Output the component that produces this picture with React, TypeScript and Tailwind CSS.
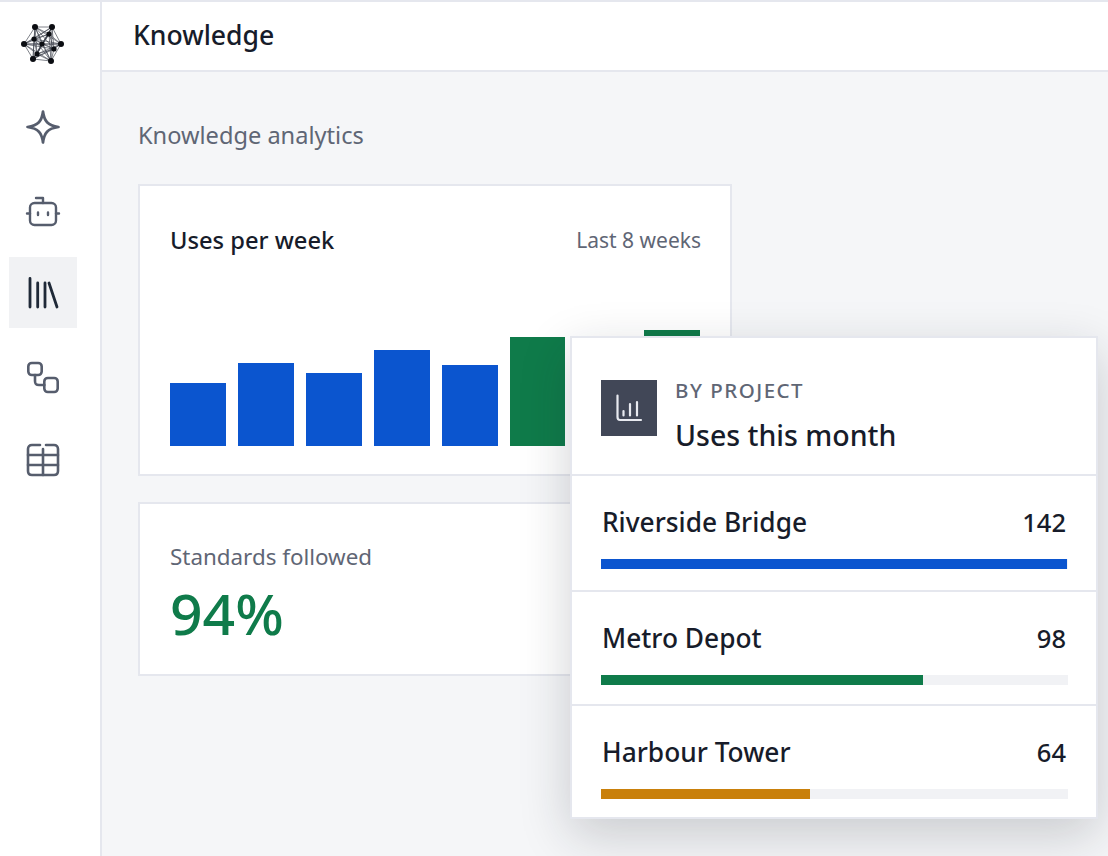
import React from "react";

const font = { fontFamily: '"Noto Sans", sans-serif' };
const bars = [
  { h: 63, w: "w-[56px]", c: "bg-[#0b55cf]" },
  { h: 83, w: "w-[56px]", c: "bg-[#0b55cf]" },
  { h: 73, w: "w-[56px]", c: "bg-[#0b55cf]" },
  { h: 96, w: "w-[56px]", c: "bg-[#0b55cf]" },
  { h: 81, w: "w-[56px]", c: "bg-[#0b55cf]" },
  { h: 109, w: "w-[55px]", c: "bg-[#0f7b4a]" },
  { h: 90, w: "w-[55px]", c: "bg-[#0b55cf]" },
  { h: 116, w: "w-[56px]", c: "bg-[#0f7b4a]" },
];
const rows = [
  { n: "Riverside Bridge", v: "142", w: 466, c: "bg-[#0b55cf]", h: "h-[116px]" },
  { n: "Metro Depot", v: "98", w: 322, c: "bg-[#0f7b4a]", h: "h-[114px]" },
  { n: "Harbour Tower", v: "64", w: 209, c: "bg-[#c9800b]", h: "h-[111px]" },
];

function Logo() {
  const pts: [number, number][] = [[35, 27], [52, 27], [61, 44], [51, 61], [33, 59], [24, 44], [34, 39], [49, 34], [42, 44], [54, 49], [37, 54]];
  return (
    <svg width="46" height="46" viewBox="20 21 46 46" className="block">
      {pts.map((a, i) =>
        pts.slice(i + 1).map((b, j) => (
          <line key={`${i}-${j}`} x1={a[0]} y1={a[1]} x2={b[0]} y2={b[1]} stroke="#3a3f4a" strokeWidth="0.65" />
        ))
      )}
      {pts.map((a, i) => (
        <circle key={i} cx={a[0]} cy={a[1]} r={i < 6 ? 3 : 2.6} fill="#0b0d12" />
      ))}
    </svg>
  );
}

const stroke = { fill: "none", stroke: "currentColor", strokeLinecap: "round" as const, strokeLinejoin: "round" as const };

function NavItem({ active, children }: { active?: boolean; children: React.ReactNode }) {
  return (
    <div className={`flex h-[71px] w-[68px] items-center justify-center ${active ? "bg-[#f1f2f4] text-[#1f2937]" : "text-[#565d6d]"}`}>
      {children}
    </div>
  );
}

export default function App() {
  return (
    <div className="flex h-[856px] w-[1108px] overflow-hidden border-t-2 border-[#e5e7ee] bg-[#f5f6f8] text-[#171c2a]" style={font}>
      <aside className="flex w-[102px] shrink-0 flex-col items-center border-r-2 border-[#e5e7ee] bg-white pr-[14px]">
        <div className="flex h-[89px] w-[68px] shrink-0 items-start justify-center pt-[19px]">
          <Logo />
        </div>
        <div className="flex w-[68px] flex-col gap-[12px]">
          <NavItem>
            <svg width="36" height="36" viewBox="0 0 36 36" {...stroke} strokeWidth="2.7">
              <path d="M18 2.5 C19.2 12 22.5 16.5 33.5 18 C22.5 19.5 19.2 24 18 33.5 C16.8 24 13.5 19.5 2.5 18 C13.5 16.5 16.8 12 18 2.5 Z" />
            </svg>
          </NavItem>
          <NavItem>
            <svg width="36" height="36" viewBox="0 0 36 36" {...stroke} strokeWidth="2.4" className="mt-[3px]">
              <rect x="5" y="10" width="26" height="22" rx="4.5" />
              <path d="M18 10 V5 H11" />
              <path d="M2 20.5 H5 M31 20.5 H34" />
              <path d="M13 19.5 V22 M23 19.5 V22" />
            </svg>
          </NavItem>
          <NavItem active>
            <svg width="34" height="34" viewBox="0 0 34 34" {...stroke} strokeWidth="2.8">
              <path d="M4 2.5 V31 M11.7 7 V31 M19 7 V31 M23 7 L31 31" />
            </svg>
          </NavItem>
          <NavItem>
            <svg width="36" height="36" viewBox="0 0 36 36" {...stroke} strokeWidth="2.6" className="mt-[3px]">
              <rect x="3.3" y="4" width="13.4" height="12" rx="3.5" />
              <rect x="19.3" y="19" width="13.4" height="14" rx="3.5" />
              <path d="M10 16 V22 C10 25 11 26 14 26 H19.3" />
            </svg>
          </NavItem>
          <NavItem>
            <svg width="36" height="36" viewBox="0 0 36 36" {...stroke} strokeWidth="2.6" className="mt-[3px]">
              <path d="M15 3 H7 C4.5 3 3 4.5 3 7 V29 C3 31.5 4.5 33 7 33 H29 C31.5 33 33 31.5 33 29 V7 C33 4.5 31.5 3 29 3 H21" />
              <path d="M3 13 H33 M3 23 H33 M18 7 V33" />
            </svg>
          </NavItem>
        </div>
      </aside>

      <main className="relative flex-1">
        <header className="flex h-[70px] items-center border-b-2 border-[#e5e7ee] bg-white pb-[2px] pl-[31px]">
          <h1 className="text-[26.6px] font-medium leading-none">Knowledge</h1>
        </header>
        <div className="pl-[36px] pt-[47px]">
          <p className="text-[23.6px] leading-[32px] text-[#5f6675]">Knowledge analytics</p>
          <section className="mt-[33px] h-[292px] w-[594px] border-2 border-[#e5e7ee] bg-white">
            <div className="flex items-center justify-between pl-[30px] pr-[29px] pt-[38px]">
              <h2 className="text-[23.7px] font-medium leading-[32px]">Uses per week</h2>
              <span className="text-[21px] leading-[32px] text-[#5f6675]">Last 8 weeks</span>
            </div>
            <div className="ml-[30px] mt-[44px] flex h-[146px] items-end gap-[12px]">
              {bars.map((b, i) => (
                <div key={i} className={`${b.w} ${b.c}`} style={{ height: b.h }} />
              ))}
            </div>
          </section>
          <section className="mt-[26px] h-[174px] w-[594px] border-2 border-[#e5e7ee] bg-white pl-[30px] pt-[37px]">
            <p className="text-[22.4px] leading-[32px] text-[#5f6675]">Standards followed</p>
            <p className="mt-[7px] text-[57px] font-medium leading-[66px] text-[#0f7b4a]">94%</p>
          </section>
        </div>

        <div className="absolute left-[468px] top-[334px] w-[528px] border-2 border-[#e5e7ee] bg-white shadow-[0_16px_48px_rgba(23,28,42,0.2)]">
          <div className="flex h-[138px] items-center border-b-2 border-[#e5e7ee] pl-[29px]">
            <div className="mt-[4px] flex h-[56px] w-[56px] items-center justify-center bg-[#414757]">
              <svg width="28" height="28" viewBox="0 0 28 28" fill="none" stroke="#e8eaf0" strokeWidth="2.2" strokeLinecap="round">
                <path d="M2.5 1.5 V23 C2.5 25 3.5 26 5 26 H26" />
                <path d="M8.5 17 V21.5 M15 10 V21.5 M22 8 V21.5" />
              </svg>
            </div>
            <div className="ml-[18px] mt-[16px]">
              <p className="text-[20.5px] font-medium leading-[28px] tracking-[1.5px] text-[#5f6675]">BY PROJECT</p>
              <p className="mt-[13px] text-[28.5px] font-medium leading-[36px]">Uses this month</p>
            </div>
          </div>
          {rows.map((r, i) => (
            <div key={r.n} className={`${r.h} pl-[29px] pr-[30px] pt-[26px] ${i < 2 ? "border-b-2 border-[#e5e7ee]" : ""}`}>
              <div className="flex items-center justify-between pl-[1px]">
                <span className="text-[26.3px] font-medium leading-[40px]">{r.n}</span>
                <span className="text-[25.5px] font-medium leading-[40px]">{r.v}</span>
              </div>
              <div className="mt-[17px] h-[10px] w-[467px] bg-[#f1f2f5]">
                <div className={`h-full ${r.c}`} style={{ width: r.w }} />
              </div>
            </div>
          ))}
        </div>
      </main>
    </div>
  );
}
